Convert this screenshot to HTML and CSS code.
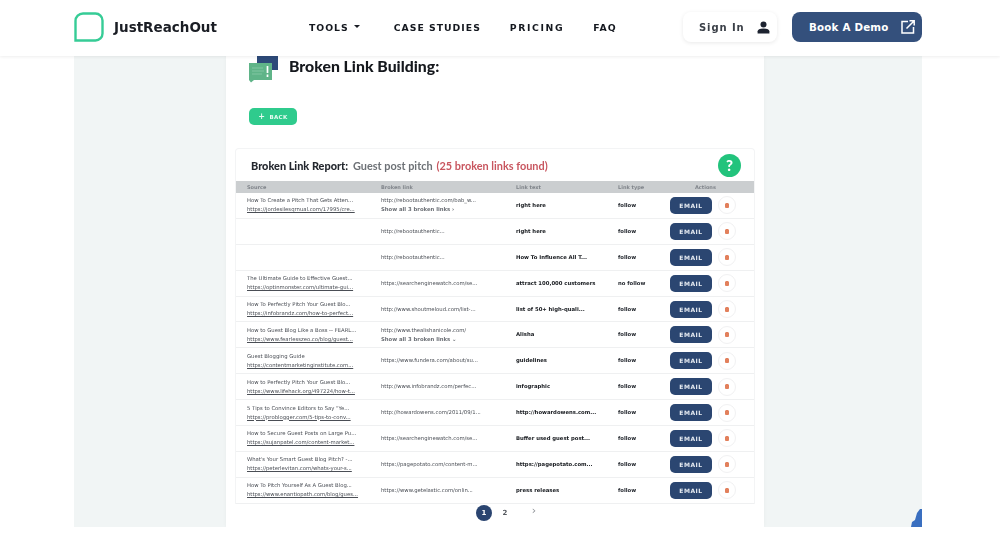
FILE: index.html
```html
<!DOCTYPE html>
<html lang="en">
<head>
    <meta charset="UTF-8">
    <meta name="viewport" content="width=device-width, initial-scale=1.0">
    <title>JustReachOut</title>
    <link rel="stylesheet" href="styles.css">
</head>
<body>
    <header class="topbar">
        <a class="brand">
            <svg class="brand-mark" width="30" height="30" viewBox="0 0 30 30"><path d="M9 1.500h12.500a7 7 0 0 1 7 7v13a7 7 0 0 1-7 7H1.500V9a7.500 7.500 0 0 1 7.500-7.500z" fill="none" stroke="#36cc96" stroke-width="2.400"/></svg>
            <span>JustReachOut</span>
        </a>
        <nav class="nav">
            <a class="nav-tools">TOOLS <i class="caret"></i></a>
            <a class="nav-case">CASE STUDIES</a>
            <a class="nav-pricing">PRICING</a>
            <a>FAQ</a>
        </nav>
        <a class="signin">Sign In
            <svg width="13" height="13" viewBox="0 0 13 13"><circle cx="6.500" cy="3.400" r="3" fill="#1d2330"/><path d="M.6 12.500v-2.200c0-1.800 2-2.900 5.900-2.900s5.900 1.100 5.900 2.900v2.200z" fill="#1d2330"/></svg>
        </a>
        <a class="demo">Book A Demo
            <svg width="14" height="14" viewBox="0 0 14 14" fill="none" stroke="#fff" stroke-width="1.500"><path d="M7 1.500H1v11.500h11.500V7"/><path d="M5.500 8.500 13 1M8.500 .8H13.200V5.500"/></svg>
        </a>
    </header>

    <main class="hero">
        <section class="panel">
            <div class="title-row">
                <svg width="30" height="27" viewBox="0 0 30 27"><path d="M8 0h21v14h-6v4H8z" fill="#2d4a79"/><path d="M0 7h23v17H5l-3 2.500-2-2.500z" fill="#5fb488"/><path d="M3 12h11M3 15h12M3 18h10" stroke="#82c6a2" stroke-width="1"/><path d="M18.500 10v7M18.500 18.500v2.500" stroke="#fff" stroke-width="1.700"/></svg>
                <h1>Broken Link Building:</h1>
            </div>
            <a class="back"><b>+</b> BACK</a>

            <div class="report">
                <div class="report-head">
                    <h2>Broken Link Report:</h2>
                    <span class="report-name">Guest post pitch</span>
                    <span class="report-count">(25 broken links found)</span>
                    <i class="help">?</i>
                </div>
                <div class="row row-head">
                    <span>Source</span><span>Broken link</span><span>Link text</span><span>Link type</span><span class="actions-label">Actions</span>
                </div>

                <div class="row">
                    <div class="source"><p>How To Create a Pitch That Gets Atten...</p><a>https://jordesilesqrnual.com/17995/cre...</a></div>
                    <div class="broken"><p>http://rebootauthentic.com/bab_w...</p><p class="more">Show all 3 broken links &#8250;</p></div>
                    <div class="text">right here</div><div class="type">follow</div>
                    <div class="actions"><a class="email">EMAIL</a><a class="trash"><i></i></a></div>
                </div>
                <div class="row">
                    <div class="source"></div>
                    <div class="broken"><p>http://rebootauthentic...</p></div>
                    <div class="text">right here</div><div class="type">follow</div>
                    <div class="actions"><a class="email">EMAIL</a><a class="trash"><i></i></a></div>
                </div>
                <div class="row">
                    <div class="source"></div>
                    <div class="broken"><p>http://rebootauthentic...</p></div>
                    <div class="text">How To Influence All T...</div><div class="type">follow</div>
                    <div class="actions"><a class="email">EMAIL</a><a class="trash"><i></i></a></div>
                </div>
                <div class="row">
                    <div class="source"><p>The Ultimate Guide to Effective Guest...</p><a>https://optinmonster.com/ultimate-gui...</a></div>
                    <div class="broken"><p>https://searchenginewatch.com/se...</p></div>
                    <div class="text">attract 100,000 customers</div><div class="type">no follow</div>
                    <div class="actions"><a class="email">EMAIL</a><a class="trash"><i></i></a></div>
                </div>
                <div class="row">
                    <div class="source"><p>How To Perfectly Pitch Your Guest Blo...</p><a>https://infobrandz.com/how-to-perfect...</a></div>
                    <div class="broken"><p>http://www.shoutmeloud.com/list-...</p></div>
                    <div class="text">list of 50+ high-quali...</div><div class="type">follow</div>
                    <div class="actions"><a class="email">EMAIL</a><a class="trash"><i></i></a></div>
                </div>
                <div class="row">
                    <div class="source"><p>How to Guest Blog Like a Boss -- FEARL...</p><a>https://www.fearlesszeo.co/blog/guest...</a></div>
                    <div class="broken"><p>http://www.thealishanicole.com/</p><p class="more">Show all 3 broken links &#8964;</p></div>
                    <div class="text">Alisha</div><div class="type">follow</div>
                    <div class="actions"><a class="email">EMAIL</a><a class="trash"><i></i></a></div>
                </div>
                <div class="row">
                    <div class="source"><p>Guest Blogging Guide</p><a>https://contentmarketinginstitute.com...</a></div>
                    <div class="broken"><p>https://www.fundera.com/about/su...</p></div>
                    <div class="text">guidelines</div><div class="type">follow</div>
                    <div class="actions"><a class="email">EMAIL</a><a class="trash"><i></i></a></div>
                </div>
                <div class="row">
                    <div class="source"><p>How to Perfectly Pitch Your Guest Blo...</p><a>https://www.lifehack.org/497224/how-t...</a></div>
                    <div class="broken"><p>http://www.infobrandz.com/perfec...</p></div>
                    <div class="text">infographic</div><div class="type">follow</div>
                    <div class="actions"><a class="email">EMAIL</a><a class="trash"><i></i></a></div>
                </div>
                <div class="row">
                    <div class="source"><p>5 Tips to Convince Editors to Say "Ye...</p><a>https://problogger.com/5-tips-to-conv...</a></div>
                    <div class="broken"><p>http://howardowens.com/2011/09/1...</p></div>
                    <div class="text">http://howardowens.com...</div><div class="type">follow</div>
                    <div class="actions"><a class="email">EMAIL</a><a class="trash"><i></i></a></div>
                </div>
                <div class="row">
                    <div class="source"><p>How to Secure Guest Posts on Large Pu...</p><a>https://sujanpatel.com/content-market...</a></div>
                    <div class="broken"><p>https://searchenginewatch.com/se...</p></div>
                    <div class="text">Buffer used guest post...</div><div class="type">follow</div>
                    <div class="actions"><a class="email">EMAIL</a><a class="trash"><i></i></a></div>
                </div>
                <div class="row">
                    <div class="source"><p>What's Your Smart Guest Blog Pitch? -...</p><a>https://peterlevitan.com/whats-your-s...</a></div>
                    <div class="broken"><p>https://pagepotato.com/content-m...</p></div>
                    <div class="text">https://pagepotato.com...</div><div class="type">follow</div>
                    <div class="actions"><a class="email">EMAIL</a><a class="trash"><i></i></a></div>
                </div>
                <div class="row">
                    <div class="source"><p>How To Pitch Yourself As A Guest Blog...</p><a>https://www.enantiopath.com/blog/gues...</a></div>
                    <div class="broken"><p>https://www.getelastic.com/onlin...</p></div>
                    <div class="text">press releases</div><div class="type">follow</div>
                    <div class="actions"><a class="email">EMAIL</a><a class="trash"><i></i></a></div>
                </div>
            </div>

            <div class="pager">
                <a class="page current">1</a>
                <a class="page">2</a>
                <a class="page next">&#8250;</a>
            </div>
        </section>
        <svg class="chat-blob" width="11" height="18" viewBox="0 0 11 18"><path d="M9 0h2v18H0l1-5 3-2 2-7z" fill="#3a6fc0"/></svg>
    </main>
</body>
</html>
```

FILE: styles.css
```css
body {
    margin: 0;
    height: 560px;
    overflow: hidden;
    background: #ffffff;
    font-family: 'Lato', sans-serif;
    color: #14181f;
}
p, h1, h2 {
    margin: 0;
}

/* top bar */
.topbar {
    position: relative;
    z-index: 2;
    display: flex;
    align-items: center;
    height: 56px;
    padding: 0 78px 2px 74px;
    box-sizing: border-box;
    background: #ffffff;
    box-shadow: 0 1px 3px rgba(0, 0, 0, 0.07);
    filter: blur(0.3px);
}
.brand {
    display: flex;
    align-items: center;
    gap: 10px;
    font-family: 'DejaVu Sans', sans-serif;
    font-weight: 700;
    font-size: 13.500px;
    color: #1a1d24;
}
.nav {
    display: flex;
    align-items: center;
    margin-left: 92px;
    font-family: 'DejaVu Sans', sans-serif;
    font-weight: 700;
    font-size: 9.300px;
    letter-spacing: 1px;
}
.nav-tools {
    display: flex;
    align-items: center;
    gap: 5px;
    margin-right: 34px;
}
.nav-case {
    margin-right: 29px;
}
.nav-pricing {
    margin-right: 29px;
    letter-spacing: 1.600px;
}
.caret {
    width: 0;
    height: 0;
    margin-top: -2px;
    border: 3px solid transparent;
    border-top-color: #1a1d24;
    border-bottom: 0;
}
.signin {
    display: flex;
    align-items: center;
    justify-content: space-between;
    box-sizing: border-box;
    width: 94px;
    height: 30px;
    margin-left: auto;
    padding: 0 7px 0 16px;
    border-radius: 8px;
    box-shadow: 0 1px 4px rgba(0, 0, 0, 0.09);
    font-family: 'DejaVu Sans', sans-serif;
    font-size: 10px;
    font-weight: 700;
    letter-spacing: 0.900px;
    color: #3b4048;
}
.demo {
    display: flex;
    align-items: center;
    justify-content: space-between;
    box-sizing: border-box;
    width: 130px;
    height: 30px;
    margin-left: 15px;
    padding: 0 7px 0 17px;
    border-radius: 8px;
    background: #34507c;
    font-family: 'DejaVu Sans', sans-serif;
    font-size: 10.300px;
    font-weight: 700;
    letter-spacing: 0.200px;
    color: #ffffff;
}

/* grey area with the white page in it */
.hero {
    position: relative;
    height: 471px;
    margin: 0 78px 0 74px;
    background: #f1f5f5;
    overflow: hidden;
}
.panel {
    box-sizing: border-box;
    width: 538px;
    height: 471px;
    margin-left: 152px;
    padding: 0 9px;
    background: #ffffff;
    box-shadow: 0 0 4px rgba(0, 0, 0, 0.04);
    filter: blur(0.45px);
}
.title-row {
    display: flex;
    align-items: flex-start;
    gap: 10px;
    height: 52px;
    padding-left: 14px;
}
.title-row h1 {
    font-family: 'Lato', sans-serif;
    font-size: 15.800px;
    line-height: 19px;
    font-weight: 900;
    color: #15181d;
}
.back {
    display: flex;
    align-items: center;
    justify-content: center;
    gap: 4px;
    width: 48px;
    height: 17px;
    margin-left: 14px;
    border-radius: 5px;
    background: #2fcb8d;
    font-family: 'DejaVu Sans', sans-serif;
    font-size: 5.500px;
    font-weight: 700;
    letter-spacing: 0.400px;
    color: #e8fbf2;
}
.back b {
    font-size: 8px;
    line-height: 8px;
}

/* report card */
.report {
    margin-top: 23px;
    border: 1px solid #f3f4f5;
    border-bottom: 0;
    border-radius: 4px 4px 0 0;
}
.report-head {
    display: flex;
    align-items: center;
    gap: 5px;
    height: 32px;
    padding: 0 13px 0 15px;
    font-size: 10.900px;
    font-weight: 700;
}
.report-head h2 {
    font-size: 10.900px;
    font-weight: 900;
    color: #23272e;
}
.report-name {
    font-weight: 700;
    color: #6d7176;
}
.report-count {
    margin-left: -1px;
    color: #c8565f;
}
.help {
    display: flex;
    align-items: center;
    justify-content: center;
    width: 23px;
    height: 23px;
    margin-left: auto;
    border-radius: 50%;
    background: #22c37c;
    font-style: normal;
    font-size: 15px;
    font-weight: 900;
    color: #ffffff;
}
.row {
    display: grid;
    grid-template-columns: 134px 135px 102px 52px 1fr;
    align-items: center;
    box-sizing: border-box;
    height: 25.900px;
    padding-left: 11px;
    border-bottom: 1px solid #eff0f1;
    font-family: 'DejaVu Sans', sans-serif;
    font-size: 5.300px;
    line-height: 9px;
    color: #4a4e55;
}
.row-head {
    height: 12px;
    border-bottom: 0;
    background: #cbced0;
    font-size: 5px;
    font-weight: 700;
    color: #80858b;
}
.actions-label {
    padding-left: 25px;
}
.source a {
    display: block;
    text-decoration: underline;
    color: #4a4e55;
}
.source, .broken {
    white-space: nowrap;
}
.more {
    font-weight: 700;
    color: #6c7076;
}
.text {
    font-weight: 700;
    color: #15181d;
    white-space: nowrap;
}
.type {
    font-weight: 700;
    color: #23272e;
}
.actions {
    display: flex;
    align-items: center;
    gap: 6px;
}
.email {
    display: flex;
    align-items: center;
    justify-content: center;
    width: 42px;
    height: 17px;
    border-radius: 5px;
    background: #2b4671;
    font-size: 6px;
    font-weight: 700;
    letter-spacing: 0.500px;
    color: #e6ebf2;
}
.trash {
    display: flex;
    align-items: center;
    justify-content: center;
    width: 16px;
    height: 16px;
    border: 1px solid #f1f1f2;
    border-radius: 50%;
}
.trash i {
    width: 4px;
    height: 4px;
    margin-top: 1px;
    border-radius: 0 0 1px 1px;
    background: #e2805c;
    box-shadow: 0 -1.500px 0 -0.500px #e2805c;
}

/* pagination */
.pager {
    display: flex;
    align-items: center;
    margin: -1px 0 0 241px;
    height: 20px;
    font-family: 'DejaVu Sans', sans-serif;
    font-size: 7px;
    font-weight: 700;
    color: #55595f;
}
.page {
    display: flex;
    align-items: center;
    justify-content: center;
    width: 16px;
    height: 16px;
    margin-right: 5px;
}
.current {
    border-radius: 50%;
    background: #2a4470;
    color: #ffffff;
}
.next {
    margin: -4px 0 0 8px;
    font-size: 11px;
    font-weight: 400;
    color: #8b8f94;
}

.chat-blob {
    position: absolute;
    right: 0;
    bottom: 0;
}
```
